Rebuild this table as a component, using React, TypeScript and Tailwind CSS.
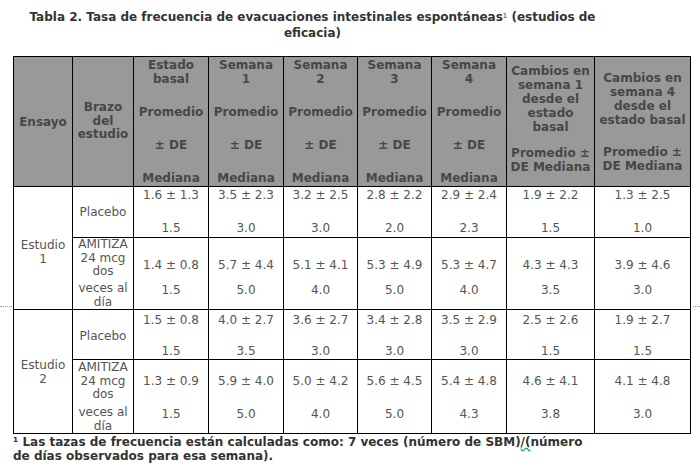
import React from 'react';

type Row = {
  study?: string;
  studySpan?: number;
  studyPt?: string;
  arm: 'placebo' | 'amitiza';
  h: string;
  pt: string;
  gap: string;
  armPt: string;
  armGap: string;
  vals: [string, string][];
};

const rows: Row[] = [
  {
    study: 'Estudio 1',
    studySpan: 2,
    studyPt: 'pt-[8px]',
    arm: 'placebo',
    h: 'h-[51px]',
    pt: 'pt-[1px]',
    gap: 'mt-[19px]',
    armPt: 'pt-0',
    armGap: '',
    vals: [
      ['1.6 ± 1.3', '1.5'],
      ['3.5 ± 2.3', '3.0'],
      ['3.2 ± 2.5', '3.0'],
      ['2.8 ± 2.2', '2.0'],
      ['2.9 ± 2.4', '2.3'],
      ['1.9 ± 2.2', '1.5'],
      ['1.3 ± 2.5', '1.0'],
    ],
  },
  {
    arm: 'amitiza',
    h: 'h-[71px]',
    pt: 'pt-[20px]',
    gap: 'mt-[11px]',
    armPt: 'pt-0',
    armGap: 'mt-[3.5px]',
    vals: [
      ['1.4 ± 0.8', '1.5'],
      ['5.7 ± 4.4', '5.0'],
      ['5.1 ± 4.1', '4.0'],
      ['5.3 ± 4.9', '5.0'],
      ['5.3 ± 4.7', '4.0'],
      ['4.3 ± 4.3', '3.5'],
      ['3.9 ± 4.6', '3.0'],
    ],
  },
  {
    study: 'Estudio 2',
    studySpan: 2,
    studyPt: 'pt-0',
    arm: 'placebo',
    h: 'h-[50px]',
    pt: 'pt-[3px]',
    gap: 'mt-[17px]',
    armPt: 'pt-[2px]',
    armGap: '',
    vals: [
      ['1.5 ± 0.8', '1.5'],
      ['4.0 ± 2.7', '3.5'],
      ['3.6 ± 2.7', '3.0'],
      ['3.4 ± 2.8', '3.0'],
      ['3.5 ± 2.9', '3.0'],
      ['2.5 ± 2.6', '1.5'],
      ['1.9 ± 2.7', '1.5'],
    ],
  },
  {
    arm: 'amitiza',
    h: 'h-[74px]',
    pt: 'pt-[14px]',
    gap: 'mt-[19px]',
    armPt: 'pt-[1px]',
    armGap: 'mt-[4.5px]',
    vals: [
      ['1.3 ± 0.9', '1.5'],
      ['5.9 ± 4.0', '5.0'],
      ['5.0 ± 4.2', '4.0'],
      ['5.6 ± 4.5', '5.0'],
      ['5.4 ± 4.8', '4.3'],
      ['4.6 ± 4.1', '3.8'],
      ['4.1 ± 4.8', '3.0'],
    ],
  },
];

const weekCols = [
  ['Estado', 'basal'],
  ['Semana', '1'],
  ['Semana', '2'],
  ['Semana', '3'],
  ['Semana', '4'],
];

const cell = 'border border-black p-0';

export default function App() {
  return (
    <div className="w-[700px] h-[472px] bg-white font-['DejaVu_Sans',sans-serif] text-[12px] overflow-hidden">
      {/* Title */}
      <div className="w-[625px] pt-[9px] text-center font-bold leading-[16px] text-[#333]">
        <div>
          Tabla 2. Tasa de frecuencia de evacuaciones intestinales espontáneas
          <sup className="text-[7px] font-normal">1</sup> (estudios de
        </div>
        <div>eficacia)</div>
      </div>

      <div className="mt-[15px] flex">
        <div className="w-[13px] shrink-0">
          <div className="mt-[250px] w-[12px] border-t border-dotted border-[#999]" />
        </div>

        <table className="table-fixed border-collapse w-[677px] shrink-0 text-center">
          <colgroup>
            <col className="w-[59px]" />
            <col className="w-[61px]" />
            <col className="w-[75px]" />
            <col className="w-[75px]" />
            <col className="w-[74px]" />
            <col className="w-[74px]" />
            <col className="w-[75px]" />
            <col className="w-[88px]" />
            <col className="w-[96px]" />
          </colgroup>
          <thead>
            <tr className="h-[130px] bg-[#999999] text-[#474747] font-bold leading-[14px]">
              <th className={`${cell} align-middle`}>Ensayo</th>
              <th className={`${cell} align-middle leading-[13.5px]`}>
                <div>Brazo</div>
                <div>del</div>
                <div>estudio</div>
              </th>
              {weekCols.map(([a, b], i) => (
                <th key={i} className={`${cell} align-top`}>
                  <div className="pt-[1px] whitespace-nowrap">
                    <div>{a}</div>
                    <div>{b}</div>
                    <div className="mt-[19px]">Promedio</div>
                    <div className="mt-[19px]">± DE</div>
                    <div className="mt-[19px]">Mediana</div>
                  </div>
                </th>
              ))}
              <th className={`${cell} align-top`}>
                <div className="pt-[7px] whitespace-nowrap">
                  <div>Cambios en</div>
                  <div>semana 1</div>
                  <div>desde el</div>
                  <div>estado</div>
                  <div>basal</div>
                  <div className="mt-[12px]">Promedio ±</div>
                  <div>DE Mediana</div>
                </div>
              </th>
              <th className={`${cell} align-top`}>
                <div className="pt-[14px] whitespace-nowrap">
                  <div>Cambios en</div>
                  <div>semana 4</div>
                  <div>desde el</div>
                  <div>estado basal</div>
                  <div className="mt-[18px]">Promedio ±</div>
                  <div>DE Mediana</div>
                </div>
              </th>
            </tr>
          </thead>
          <tbody className="text-[#555] leading-[14px]">
            {rows.map((r, i) => (
              <tr key={i} className={r.h}>
                {r.study && (
                  <td rowSpan={r.studySpan} className={`${cell} align-middle`}>
                    <div className={r.studyPt}>
                      <div>{r.study.split(' ')[0]}</div>
                      <div>{r.study.split(' ')[1]}</div>
                    </div>
                  </td>
                )}
                {r.arm === 'placebo' ? (
                  <td className={`${cell} align-middle`}>
                    <div className={r.armPt}>Placebo</div>
                  </td>
                ) : (
                  <td className={`${cell} align-top`}>
                    <div className={`${r.armPt} leading-[13.5px] whitespace-nowrap`}>
                      <div>AMITIZA</div>
                      <div>24 mcg</div>
                      <div>dos</div>
                      <div className={r.armGap}>veces al</div>
                      <div>día</div>
                    </div>
                  </td>
                )}
                {r.vals.map(([m, med], j) => (
                  <td key={j} className={`${cell} align-top`}>
                    <div className={`${r.pt} whitespace-nowrap`}>
                      <div>{m}</div>
                      <div className={r.gap}>{med}</div>
                    </div>
                  </td>
                ))}
              </tr>
            ))}
          </tbody>
        </table>

        <div className="flex-1">
          <div className="mt-[250px] ml-[2px] border-t border-dotted border-[#999]" />
        </div>
      </div>

      {/* Footnote */}
      <div className="ml-[13px] mt-[1px] font-bold leading-[14px] text-[#333] whitespace-nowrap">
        <div>
          ¹ Las tazas de frecuencia están calculadas como: 7 veces (número de SBM)
          <span className="underline decoration-wavy decoration-green-600">/(</span>número
        </div>
        <div>de días observados para esa semana).</div>
      </div>
    </div>
  );
}
